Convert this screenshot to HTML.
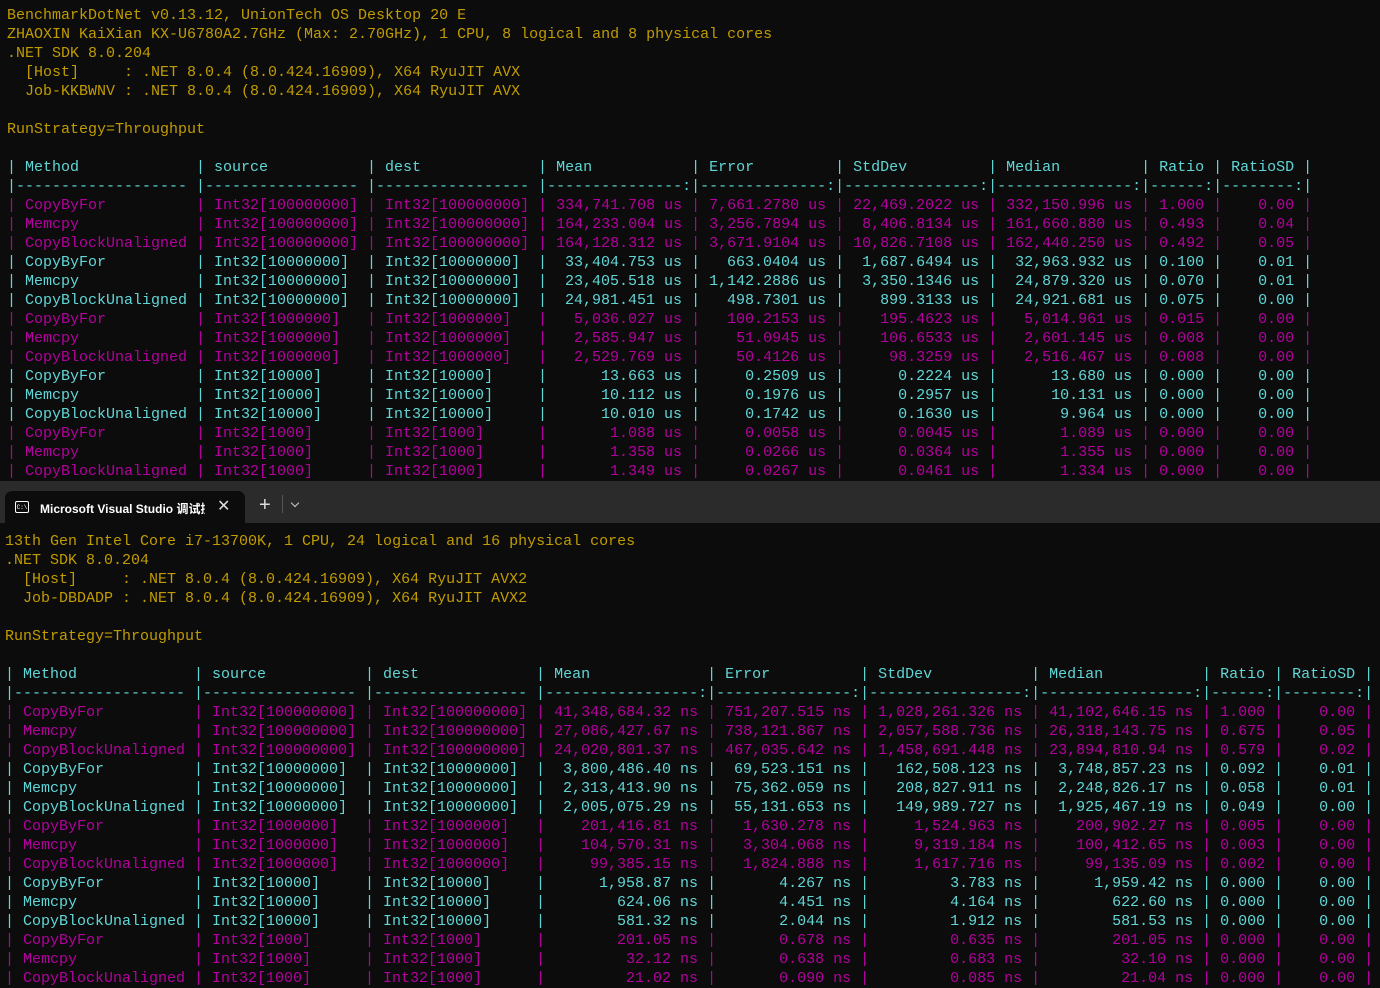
<!DOCTYPE html>
<html><head><meta charset="utf-8"><style>
html,body{margin:0;padding:0;background:#0c0c0c;width:1380px;height:987px;overflow:hidden}
.sec{position:absolute;left:0;width:1380px;font:15px/19px "Liberation Mono",monospace;white-space:pre;color:#c19c00}
.top{top:5.5px;left:7px;height:476px;overflow:hidden}
.bot{top:531.5px;left:5px}
.r{height:19px;color:#61d6d6}
.m{color:#b4009e}
.r span{display:inline-block;box-sizing:border-box;padding:0 9px;text-align:right;vertical-align:top}
.r span:nth-of-type(1),.r span:nth-of-type(2),.r span:nth-of-type(3),.h span{text-align:left}
.sp span{padding:0}
.t1 .r span:nth-of-type(1){width:180px}.t1 .r span:nth-of-type(2){width:162px}.t1 .r span:nth-of-type(3){width:162px}
.t1 .r span:nth-of-type(4){width:144px}.t1 .r span:nth-of-type(5){width:135px}.t1 .r span:nth-of-type(6){width:144px}
.t1 .r span:nth-of-type(7){width:144px}.t1 .r span:nth-of-type(8){width:63px}.t1 .r span:nth-of-type(9){width:81px}
.t2 .r span:nth-of-type(1){width:180px}.t2 .r span:nth-of-type(2){width:162px}.t2 .r span:nth-of-type(3){width:162px}
.t2 .r span:nth-of-type(4){width:162px}.t2 .r span:nth-of-type(5){width:144px}.t2 .r span:nth-of-type(6){width:162px}
.t2 .r span:nth-of-type(7){width:162px}.t2 .r span:nth-of-type(8){width:63px}.t2 .r span:nth-of-type(9){width:81px}
.bar{position:absolute;left:0;top:481px;width:1380px;height:42px;background:#2b2b2b}
.tab{position:absolute;left:5px;top:10px;width:240px;height:32px;background:#0c0c0c;border-radius:7px 7px 0 0}
.tt{position:absolute;left:35px;top:9px;font:bold 12px "Liberation Sans","Noto Sans CJK SC",sans-serif;color:#fff;white-space:nowrap;width:165px;overflow:hidden}
.ic{position:absolute;left:10px;top:10px;width:12px;height:10px;border:1.3px solid #fff;border-radius:2px;font:6px "Liberation Mono",monospace;color:#fff;line-height:12px;text-align:center}
.x{position:absolute;left:212px;top:5px;color:#ddd;font:16px "Liberation Sans",sans-serif}
</style></head><body>
<div class="sec top t1">BenchmarkDotNet v0.13.12, UnionTech OS Desktop 20 E
ZHAOXIN KaiXian KX-U6780A2.7GHz (Max: 2.70GHz), 1 CPU, 8 logical and 8 physical cores
.NET SDK 8.0.204
  [Host]     : .NET 8.0.4 (8.0.424.16909), X64 RyuJIT AVX
  Job-KKBWNV : .NET 8.0.4 (8.0.424.16909), X64 RyuJIT AVX

RunStrategy=Throughput

<div class="r h">|<span>Method</span>|<span>source</span>|<span>dest</span>|<span>Mean</span>|<span>Error</span>|<span>StdDev</span>|<span>Median</span>|<span>Ratio</span>|<span>RatioSD</span>|</div><div class="r sp h">|<span>------------------- </span>|<span>----------------- </span>|<span>----------------- </span>|<span>---------------:</span>|<span>--------------:</span>|<span>---------------:</span>|<span>---------------:</span>|<span>------:</span>|<span>--------:</span>|</div><div class="r m">|<span>CopyByFor</span>|<span>Int32[100000000]</span>|<span>Int32[100000000]</span>|<span>334,741.708 us</span>|<span>7,661.2780 us</span>|<span>22,469.2022 us</span>|<span>332,150.996 us</span>|<span>1.000</span>|<span>0.00</span>|</div><div class="r m">|<span>Memcpy</span>|<span>Int32[100000000]</span>|<span>Int32[100000000]</span>|<span>164,233.004 us</span>|<span>3,256.7894 us</span>|<span>8,406.8134 us</span>|<span>161,660.880 us</span>|<span>0.493</span>|<span>0.04</span>|</div><div class="r m">|<span>CopyBlockUnaligned</span>|<span>Int32[100000000]</span>|<span>Int32[100000000]</span>|<span>164,128.312 us</span>|<span>3,671.9104 us</span>|<span>10,826.7108 us</span>|<span>162,440.250 us</span>|<span>0.492</span>|<span>0.05</span>|</div><div class="r">|<span>CopyByFor</span>|<span>Int32[10000000]</span>|<span>Int32[10000000]</span>|<span>33,404.753 us</span>|<span>663.0404 us</span>|<span>1,687.6494 us</span>|<span>32,963.932 us</span>|<span>0.100</span>|<span>0.01</span>|</div><div class="r">|<span>Memcpy</span>|<span>Int32[10000000]</span>|<span>Int32[10000000]</span>|<span>23,405.518 us</span>|<span>1,142.2886 us</span>|<span>3,350.1346 us</span>|<span>24,879.320 us</span>|<span>0.070</span>|<span>0.01</span>|</div><div class="r">|<span>CopyBlockUnaligned</span>|<span>Int32[10000000]</span>|<span>Int32[10000000]</span>|<span>24,981.451 us</span>|<span>498.7301 us</span>|<span>899.3133 us</span>|<span>24,921.681 us</span>|<span>0.075</span>|<span>0.00</span>|</div><div class="r m">|<span>CopyByFor</span>|<span>Int32[1000000]</span>|<span>Int32[1000000]</span>|<span>5,036.027 us</span>|<span>100.2153 us</span>|<span>195.4623 us</span>|<span>5,014.961 us</span>|<span>0.015</span>|<span>0.00</span>|</div><div class="r m">|<span>Memcpy</span>|<span>Int32[1000000]</span>|<span>Int32[1000000]</span>|<span>2,585.947 us</span>|<span>51.0945 us</span>|<span>106.6533 us</span>|<span>2,601.145 us</span>|<span>0.008</span>|<span>0.00</span>|</div><div class="r m">|<span>CopyBlockUnaligned</span>|<span>Int32[1000000]</span>|<span>Int32[1000000]</span>|<span>2,529.769 us</span>|<span>50.4126 us</span>|<span>98.3259 us</span>|<span>2,516.467 us</span>|<span>0.008</span>|<span>0.00</span>|</div><div class="r">|<span>CopyByFor</span>|<span>Int32[10000]</span>|<span>Int32[10000]</span>|<span>13.663 us</span>|<span>0.2509 us</span>|<span>0.2224 us</span>|<span>13.680 us</span>|<span>0.000</span>|<span>0.00</span>|</div><div class="r">|<span>Memcpy</span>|<span>Int32[10000]</span>|<span>Int32[10000]</span>|<span>10.112 us</span>|<span>0.1976 us</span>|<span>0.2957 us</span>|<span>10.131 us</span>|<span>0.000</span>|<span>0.00</span>|</div><div class="r">|<span>CopyBlockUnaligned</span>|<span>Int32[10000]</span>|<span>Int32[10000]</span>|<span>10.010 us</span>|<span>0.1742 us</span>|<span>0.1630 us</span>|<span>9.964 us</span>|<span>0.000</span>|<span>0.00</span>|</div><div class="r m">|<span>CopyByFor</span>|<span>Int32[1000]</span>|<span>Int32[1000]</span>|<span>1.088 us</span>|<span>0.0058 us</span>|<span>0.0045 us</span>|<span>1.089 us</span>|<span>0.000</span>|<span>0.00</span>|</div><div class="r m">|<span>Memcpy</span>|<span>Int32[1000]</span>|<span>Int32[1000]</span>|<span>1.358 us</span>|<span>0.0266 us</span>|<span>0.0364 us</span>|<span>1.355 us</span>|<span>0.000</span>|<span>0.00</span>|</div><div class="r m">|<span>CopyBlockUnaligned</span>|<span>Int32[1000]</span>|<span>Int32[1000]</span>|<span>1.349 us</span>|<span>0.0267 us</span>|<span>0.0461 us</span>|<span>1.334 us</span>|<span>0.000</span>|<span>0.00</span>|</div></div>
<div class="bar"><div class="tab"><div class="ic">C:\</div><div class="tt">Microsoft Visual Studio 调试控制台</div><div class="x">✕</div></div>
<div style="position:absolute;left:259px;top:13px;color:#ddd;font:20px 'Liberation Sans',sans-serif">+</div>
<div style="position:absolute;left:282px;top:14px;width:1px;height:18px;background:#555"></div>
<div style="position:absolute;left:292px;top:19px;width:5px;height:5px;border-right:1.3px solid #ccc;border-bottom:1.3px solid #ccc;transform:rotate(45deg)"></div></div>
<div class="sec bot t2">13th Gen Intel Core i7-13700K, 1 CPU, 24 logical and 16 physical cores
.NET SDK 8.0.204
  [Host]     : .NET 8.0.4 (8.0.424.16909), X64 RyuJIT AVX2
  Job-DBDADP : .NET 8.0.4 (8.0.424.16909), X64 RyuJIT AVX2

RunStrategy=Throughput

<div class="r h">|<span>Method</span>|<span>source</span>|<span>dest</span>|<span>Mean</span>|<span>Error</span>|<span>StdDev</span>|<span>Median</span>|<span>Ratio</span>|<span>RatioSD</span>|</div><div class="r sp h">|<span>------------------- </span>|<span>----------------- </span>|<span>----------------- </span>|<span>-----------------:</span>|<span>---------------:</span>|<span>-----------------:</span>|<span>-----------------:</span>|<span>------:</span>|<span>--------:</span>|</div><div class="r m">|<span>CopyByFor</span>|<span>Int32[100000000]</span>|<span>Int32[100000000]</span>|<span>41,348,684.32 ns</span>|<span>751,207.515 ns</span>|<span>1,028,261.326 ns</span>|<span>41,102,646.15 ns</span>|<span>1.000</span>|<span>0.00</span>|</div><div class="r m">|<span>Memcpy</span>|<span>Int32[100000000]</span>|<span>Int32[100000000]</span>|<span>27,086,427.67 ns</span>|<span>738,121.867 ns</span>|<span>2,057,588.736 ns</span>|<span>26,318,143.75 ns</span>|<span>0.675</span>|<span>0.05</span>|</div><div class="r m">|<span>CopyBlockUnaligned</span>|<span>Int32[100000000]</span>|<span>Int32[100000000]</span>|<span>24,020,801.37 ns</span>|<span>467,035.642 ns</span>|<span>1,458,691.448 ns</span>|<span>23,894,810.94 ns</span>|<span>0.579</span>|<span>0.02</span>|</div><div class="r">|<span>CopyByFor</span>|<span>Int32[10000000]</span>|<span>Int32[10000000]</span>|<span>3,800,486.40 ns</span>|<span>69,523.151 ns</span>|<span>162,508.123 ns</span>|<span>3,748,857.23 ns</span>|<span>0.092</span>|<span>0.01</span>|</div><div class="r">|<span>Memcpy</span>|<span>Int32[10000000]</span>|<span>Int32[10000000]</span>|<span>2,313,413.90 ns</span>|<span>75,362.059 ns</span>|<span>208,827.911 ns</span>|<span>2,248,826.17 ns</span>|<span>0.058</span>|<span>0.01</span>|</div><div class="r">|<span>CopyBlockUnaligned</span>|<span>Int32[10000000]</span>|<span>Int32[10000000]</span>|<span>2,005,075.29 ns</span>|<span>55,131.653 ns</span>|<span>149,989.727 ns</span>|<span>1,925,467.19 ns</span>|<span>0.049</span>|<span>0.00</span>|</div><div class="r m">|<span>CopyByFor</span>|<span>Int32[1000000]</span>|<span>Int32[1000000]</span>|<span>201,416.81 ns</span>|<span>1,630.278 ns</span>|<span>1,524.963 ns</span>|<span>200,902.27 ns</span>|<span>0.005</span>|<span>0.00</span>|</div><div class="r m">|<span>Memcpy</span>|<span>Int32[1000000]</span>|<span>Int32[1000000]</span>|<span>104,570.31 ns</span>|<span>3,304.068 ns</span>|<span>9,319.184 ns</span>|<span>100,412.65 ns</span>|<span>0.003</span>|<span>0.00</span>|</div><div class="r m">|<span>CopyBlockUnaligned</span>|<span>Int32[1000000]</span>|<span>Int32[1000000]</span>|<span>99,385.15 ns</span>|<span>1,824.888 ns</span>|<span>1,617.716 ns</span>|<span>99,135.09 ns</span>|<span>0.002</span>|<span>0.00</span>|</div><div class="r">|<span>CopyByFor</span>|<span>Int32[10000]</span>|<span>Int32[10000]</span>|<span>1,958.87 ns</span>|<span>4.267 ns</span>|<span>3.783 ns</span>|<span>1,959.42 ns</span>|<span>0.000</span>|<span>0.00</span>|</div><div class="r">|<span>Memcpy</span>|<span>Int32[10000]</span>|<span>Int32[10000]</span>|<span>624.06 ns</span>|<span>4.451 ns</span>|<span>4.164 ns</span>|<span>622.60 ns</span>|<span>0.000</span>|<span>0.00</span>|</div><div class="r">|<span>CopyBlockUnaligned</span>|<span>Int32[10000]</span>|<span>Int32[10000]</span>|<span>581.32 ns</span>|<span>2.044 ns</span>|<span>1.912 ns</span>|<span>581.53 ns</span>|<span>0.000</span>|<span>0.00</span>|</div><div class="r m">|<span>CopyByFor</span>|<span>Int32[1000]</span>|<span>Int32[1000]</span>|<span>201.05 ns</span>|<span>0.678 ns</span>|<span>0.635 ns</span>|<span>201.05 ns</span>|<span>0.000</span>|<span>0.00</span>|</div><div class="r m">|<span>Memcpy</span>|<span>Int32[1000]</span>|<span>Int32[1000]</span>|<span>32.12 ns</span>|<span>0.638 ns</span>|<span>0.683 ns</span>|<span>32.10 ns</span>|<span>0.000</span>|<span>0.00</span>|</div><div class="r m">|<span>CopyBlockUnaligned</span>|<span>Int32[1000]</span>|<span>Int32[1000]</span>|<span>21.02 ns</span>|<span>0.090 ns</span>|<span>0.085 ns</span>|<span>21.04 ns</span>|<span>0.000</span>|<span>0.00</span>|</div></div>
</body></html>
